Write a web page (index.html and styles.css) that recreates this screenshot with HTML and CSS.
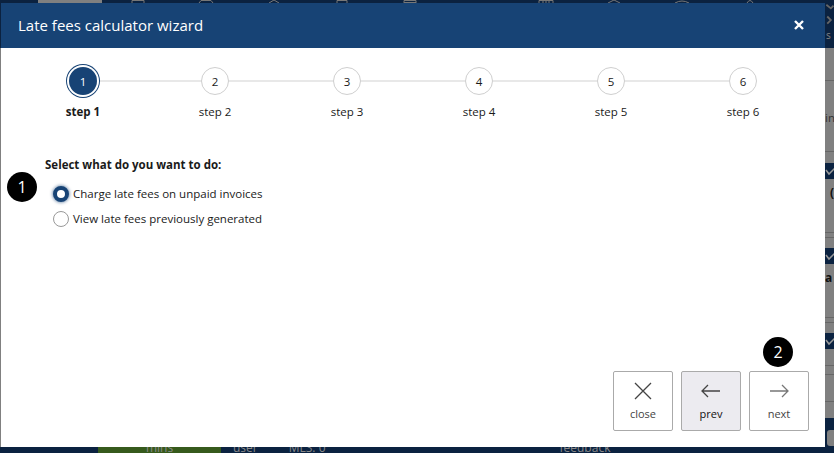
FILE: index.html
```html
<!DOCTYPE html>
<html lang="en">
<head>
    <meta charset="UTF-8">
    <meta name="viewport" content="width=device-width, initial-scale=1.0">
    <title>Late fees calculator wizard</title>
    <link rel="stylesheet" href="styles.css">
</head>
<body>
    <!-- App behind the dialog -->
    <div class="app">
        <div class="app-top">
            <span class="top-cell"><span class="top-tab"></span></span>
            <span class="top-cell"><svg class="top-icon" viewBox="0 0 16 3"><path d="M2 3V.5h12V3"/></svg></span>
            <span class="top-cell"><svg class="top-icon" viewBox="0 0 16 3"><path d="M1 3l2-2.500h10L15 3"/></svg></span>
            <span class="top-cell"><svg class="top-icon" viewBox="0 0 16 3"><path d="M3 3l5-3 5 3"/></svg></span>
            <span class="top-cell"><svg class="top-icon" viewBox="0 0 16 3"><path d="M3 3V.5h10V3"/></svg></span>
            <span class="top-cell"><svg class="top-icon" viewBox="0 0 16 3"><path d="M2 3V.5h12V3M2 2.500h12"/></svg></span>
            <span class="top-cell"></span>
            <span class="top-cell"><svg class="top-icon" viewBox="0 0 16 3"><path d="M1 3V.5h14V3M5 .5V3M8 .5V3M11 .5V3"/></svg></span>
            <span class="top-cell"><svg class="top-icon" viewBox="0 0 16 3"><path d="M2 3l6-3 6 3"/></svg></span>
            <span class="top-cell"><svg class="top-icon" viewBox="0 0 16 3"><path d="M1 3q7-4 14 0"/></svg></span>
            <span class="top-cell"><svg class="top-icon" viewBox="0 0 16 3"><path d="M5 3q3-5 6 0"/></svg></span>
            <div class="top-end">
                <svg viewBox="0 0 9 30"><path d="M1 2l5 4 3-3M2 15l4 4-4 4"/></svg>
                <span>s</span>
            </div>
        </div>
        <div class="app-middle">
            <div class="side-panel">
                <div class="side-row row-tall"></div>
                <div class="side-row row-int"><span class="side-int">int</span></div>
                <div class="side-row row-check">
                    <span class="side-check"><svg viewBox="0 0 9 16"><path d="M1 7l3 4 6-6"/></svg></span>
                    <span class="side-text side-paren">(</span>
                </div>
                <div class="side-row row-thin"></div>
                <div class="side-row row-check">
                    <span class="side-check"><svg viewBox="0 0 9 16"><path d="M1 7l3 4 6-6"/></svg></span>
                    <span class="side-text">a</span>
                </div>
                <div class="side-row row-thin"></div>
                <div class="side-row row-short">
                    <span class="side-check"><svg viewBox="0 0 9 16"><path d="M1 7l3 4 6-6"/></svg></span>
                </div>
                <div class="side-row row-gap"></div>
                <div class="side-row row-mid"></div>
                <div class="side-last"></div>
                <div class="side-foot"><span class="side-button"></span></div>
            </div>
        </div>
        <div class="app-bottom">
            <span class="bottom-mins">mins</span>
            <span class="bottom-item">user</span>
            <span class="bottom-item">MLS: 0</span>
            <span class="bottom-feedback">feedback</span>
        </div>
    </div>

    <!-- Wizard dialog -->
    <div class="modal">
        <div class="modal-header">
            <h1>Late fees calculator wizard</h1>
            <button class="modal-close" type="button" aria-label="close">
                <svg viewBox="0 0 10 10"><path d="M1 1l8 8M9 1l-8 8"/></svg>
            </button>
        </div>
        <div class="modal-body">
            <ol class="steps">
                <li class="step active"><span class="step-num">1</span><span class="step-label">step 1</span></li>
                <li class="step"><span class="step-num">2</span><span class="step-label">step 2</span></li>
                <li class="step"><span class="step-num">3</span><span class="step-label">step 3</span></li>
                <li class="step"><span class="step-num">4</span><span class="step-label">step 4</span></li>
                <li class="step"><span class="step-num">5</span><span class="step-label">step 5</span></li>
                <li class="step"><span class="step-num">6</span><span class="step-label">step 6</span></li>
            </ol>

            <form class="choice">
                <span class="badge badge-one">1</span>
                <p class="choice-title">Select what do you want to do:</p>
                <label class="radio-row"><span class="radio checked"></span>Charge late fees on unpaid invoices</label>
                <label class="radio-row"><span class="radio"></span>View late fees previously generated</label>
            </form>

            <div class="actions">
                <span class="badge badge-two">2</span>
                <button class="action" type="button">
                    <svg viewBox="0 0 24 24"><path d="M4 4l16 16M20 4L4 20"/></svg>
                    close
                </button>
                <button class="action current" type="button">
                    <svg viewBox="0 0 24 24"><path d="M21 12H3M9 6l-6 6 6 6"/></svg>
                    prev
                </button>
                <button class="action muted" type="button">
                    <svg viewBox="0 0 24 24"><path d="M3 12h18M15 6l6 6-6 6"/></svg>
                    next
                </button>
            </div>
        </div>
    </div>
</body>
</html>
```

FILE: styles.css
```css
* {
    box-sizing: border-box;
}

html, body {
    height: 100%;
}

body {
    margin: 0;
    position: relative;
    overflow: hidden;
    font-family: "Open Sans", "Noto Sans", Arial, sans-serif;
    font-size: 11.5px;
    color: #1a1a1a;
    background-color: #808080;
}

/* background app */
.app {
    height: 100%;
    display: flex;
    flex-direction: column;
}

.app-top {
    height: 48px;
    flex: none;
    padding-left: 36px;
    display: flex;
    position: relative;
    background-color: #0b2240;
}

.top-cell {
    width: 68px;
    height: 3px;
    display: flex;
    justify-content: center;
}

.top-tab {
    width: 64px;
    height: 3px;
    background-color: #808080;
}

.top-icon {
    width: 16px;
    height: 3px;
    fill: none;
    stroke: #777;
    stroke-width: 1;
}

.top-end {
    position: absolute;
    top: 3px;
    right: 0;
    width: 9px;
    color: #888;
    font-size: 10px;
    line-height: 10px;
}

.top-end svg {
    display: block;
    width: 9px;
    height: 27px;
    fill: none;
    stroke: #666;
    stroke-width: 2;
}

.top-end span {
    margin-left: 1px;
}

.app-middle {
    flex: 1;
    display: flex;
    justify-content: flex-end;
}

.side-panel {
    width: 20px;
    padding-left: 11px;
    display: flex;
    flex-direction: column;
    overflow: hidden;
}

.side-row {
    flex: none;
    border-bottom: 1px solid #666;
}

.row-tall { height: 33px; }
.row-int { height: 71px; padding-top: 29px; }
.row-check { height: 81px; padding-top: 11px; }
.row-thin { height: 5px; }
.row-short { height: 43px; padding-top: 10px; }
.row-gap { height: 9px; }
.row-mid { height: 27px; }

.side-row.row-check + .row-thin + .row-check {
    height: 80px;
    padding-top: 10px;
}

.side-int {
    color: #333;
    line-height: 14px;
}

.side-check {
    display: block;
    height: 16px;
    background-color: #0b2240;
}

.side-check svg {
    display: block;
    width: 9px;
    height: 16px;
    fill: none;
    stroke: #9a9a9a;
    stroke-width: 1.5;
}

.side-text {
    display: block;
    margin-top: 6px;
    font-weight: 700;
    font-size: 12px;
    line-height: 16px;
    color: #111;
}

.side-paren {
    margin-left: 5px;
}

.side-last {
    height: 16px;
    flex: none;
}

.side-foot {
    flex: 1;
    padding: 12px 0 1px 2px;
    background-color: #0b2240;
}

.side-button {
    display: block;
    height: 16px;
    border-radius: 3px 0 0 3px;
    background-color: #808080;
}

.app-bottom {
    height: 6px;
    flex: none;
    padding-left: 98px;
    display: flex;
    overflow: hidden;
    background-color: #0b2240;
    color: #888;
    line-height: 1;
    font-size: 12px;
}

.bottom-mins {
    width: 123px;
    height: 11px;
    margin-top: -5px;
    padding-top: 0;
    text-align: center;
    background-color: #365a1c;
}

.bottom-item {
    margin-left: 12px;
    margin-right: 19px;
    margin-top: -5px;
}

.bottom-feedback {
    margin-left: 215px;
    margin-top: -5px;
}

/* dialog */
.modal {
    position: absolute;
    top: 3px;
    left: 1px;
    width: 824px;
    height: 444px;
    display: flex;
    flex-direction: column;
    background-color: #fff;
}

.modal-header {
    height: 45px;
    flex: none;
    padding: 0 21px 2px 17px;
    display: flex;
    align-items: center;
    justify-content: space-between;
    color: #fff;
    background-color: #174375;
}

.modal-header h1 {
    margin: 0;
    font-size: 15px;
    font-weight: 400;
}

.modal-close {
    width: 10px;
    height: 10px;
    padding: 0;
    border: none;
    background: none;
    cursor: pointer;
}

.modal-close svg {
    display: block;
    width: 10px;
    height: 10px;
    fill: none;
    stroke: #fff;
    stroke-width: 2.4;
}

.modal-body {
    flex: 1;
    display: flex;
    flex-direction: column;
    position: relative;
}

/* steps */
.steps {
    list-style: none;
    margin: 0;
    padding: 13px 0 0 16px;
    display: flex;
}

.step {
    width: 132px;
    display: flex;
    flex-direction: column;
    align-items: center;
    position: relative;
}

.step:not(:last-child)::after {
    content: "";
    position: absolute;
    top: 19px;
    left: 66px;
    width: 132px;
    height: 2px;
    background-color: #e8e8e8;
}

.step-num {
    width: 28px;
    height: 28px;
    margin: 6px 0;
    border: 1px solid #cfcfcf;
    border-radius: 50%;
    display: flex;
    align-items: center;
    justify-content: center;
    position: relative;
    z-index: 1;
    background-color: #fff;
}

.step-label {
    margin-top: 3px;
    line-height: 16px;
}

.step.active .step-num {
    color: #fff;
    background-color: #174375;
    border: none;
    box-shadow: 0 0 0 2px #fff, 0 0 0 3px #174375;
}

.step.active .step-label {
    font-weight: 700;
}

/* radios */
.choice {
    margin: 37px 0 0 44px;
    position: relative;
}

.choice-title {
    margin: 0 0 8px;
    font-weight: 700;
    line-height: 16px;
}

.radio-row {
    display: flex;
    align-items: center;
    gap: 4px;
    margin-left: 8px;
    height: 25px;
}

.radio {
    width: 16px;
    height: 16px;
    border: 1px solid #999;
    border-radius: 50%;
    background-color: #fff;
}

.radio.checked {
    border: 4px solid #174375;
    box-shadow: 0 0 3px 1px rgba(23, 67, 117, 0.5);
}

/* annotation badges */
.badge {
    position: absolute;
    width: 30px;
    height: 30px;
    border-radius: 50%;
    display: flex;
    align-items: center;
    justify-content: center;
    color: #fff;
    font-size: 16px;
    background-color: #000;
}

.badge-one {
    top: 15px;
    left: -38px;
}

.badge-two {
    top: -34px;
    right: 32px;
}

/* footer buttons */
.actions {
    margin-top: auto;
    padding: 0 16px 16px 0;
    display: flex;
    justify-content: flex-end;
    gap: 8px;
    position: relative;
}

.action {
    width: 60px;
    height: 60px;
    padding: 7px 0 0;
    border: 1px solid #aaa;
    border-radius: 2px;
    display: flex;
    flex-direction: column;
    align-items: center;
    font-family: inherit;
    font-size: 11px;
    color: #444;
    background-color: #fff;
    cursor: pointer;
}

.action svg {
    width: 24px;
    height: 24px;
    margin-bottom: 3px;
    fill: none;
    stroke: #444;
    stroke-width: 1.3;
}

.action.current {
    color: #111;
    background-color: #ecebf0;
}

.action.muted svg {
    stroke: #777;
}
```
